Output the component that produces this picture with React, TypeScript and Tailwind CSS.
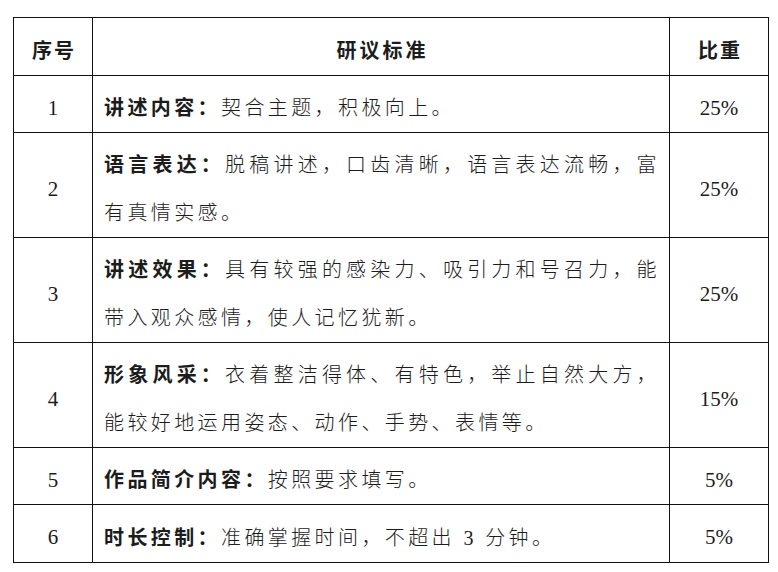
import React from "react";

type Row = {
  no: string;
  label: string;
  lines: string[];
  weight: string;
  h: string;
};

const ROWS: Row[] = [
  { no: "1", label: "讲述内容：", lines: ["契合主题，积极向上。"], weight: "25%", h: "h-[57px]" },
  {
    no: "2",
    label: "语言表达：",
    lines: ["脱稿讲述，口齿清晰，语言表达流畅，富", "有真情实感。"],
    weight: "25%",
    h: "h-[105px]",
  },
  {
    no: "3",
    label: "讲述效果：",
    lines: ["具有较强的感染力、吸引力和号召力，能", "带入观众感情，使人记忆犹新。"],
    weight: "25%",
    h: "h-[105px]",
  },
  {
    no: "4",
    label: "形象风采：",
    lines: ["衣着整洁得体、有特色，举止自然大方，", "能较好地运用姿态、动作、手势、表情等。"],
    weight: "15%",
    h: "h-[104px]",
  },
  { no: "5", label: "作品简介内容：", lines: ["按照要求填写。"], weight: "5%", h: "h-[57px]" },
  { no: "6", label: "时长控制：", lines: ["准确掌握时间，不超出 3 分钟。"], weight: "5%", h: "h-[58px]" },
];

const font = "font-['Liberation_Serif','Noto_Sans_CJK_SC',serif]";

export default function App() {
  return (
    <div className={`min-h-screen bg-white pl-[13px] pt-[17px] text-[#1c1c1c] ${font}`}>
      <table className="w-[755px] table-fixed border-collapse border border-[#111]">
        <colgroup>
          <col className="w-[79px]" />
          <col className="w-[577px]" />
          <col className="w-[99px]" />
        </colgroup>
        <thead>
          <tr>
            <th className="h-[58px] border border-[#111] pt-[8px] text-center text-[20px] font-semibold tracking-[2px] pl-[2px]">
              序号
            </th>
            <th className="border border-[#111] pt-[8px] text-center text-[20px] font-semibold tracking-[3px] pl-[3px]">
              研议标准
            </th>
            <th className="border border-[#111] pt-[8px] text-center text-[20px] font-semibold tracking-[2px] pl-[2px]">
              比重
            </th>
          </tr>
        </thead>
        <tbody>
          {ROWS.map((r) => (
            <tr key={r.no}>
              <td className={`${r.h} border border-[#111] pt-[8px] text-center text-[21px] leading-none`}>
                {r.no}
              </td>
              <td className="border border-[#111] pl-[11px] pr-[9px] pt-[8px] text-[20px] font-light leading-[48px] tracking-[3.4px]">
                {r.lines.length > 1 ? (
                  <>
                    <div className="text-justify [text-align-last:justify]">
                      <span className="font-bold">{r.label}</span>
                      {r.lines[0]}
                    </div>
                    <div>{r.lines[1]}</div>
                  </>
                ) : (
                  <div className="leading-[28px]">
                    <span className="font-bold">{r.label}</span>
                    {r.lines[0]}
                  </div>
                )}
              </td>
              <td className="border border-[#111] pt-[8px] text-center text-[21px] leading-none">
                {r.weight}
              </td>
            </tr>
          ))}
        </tbody>
      </table>
    </div>
  );
}
